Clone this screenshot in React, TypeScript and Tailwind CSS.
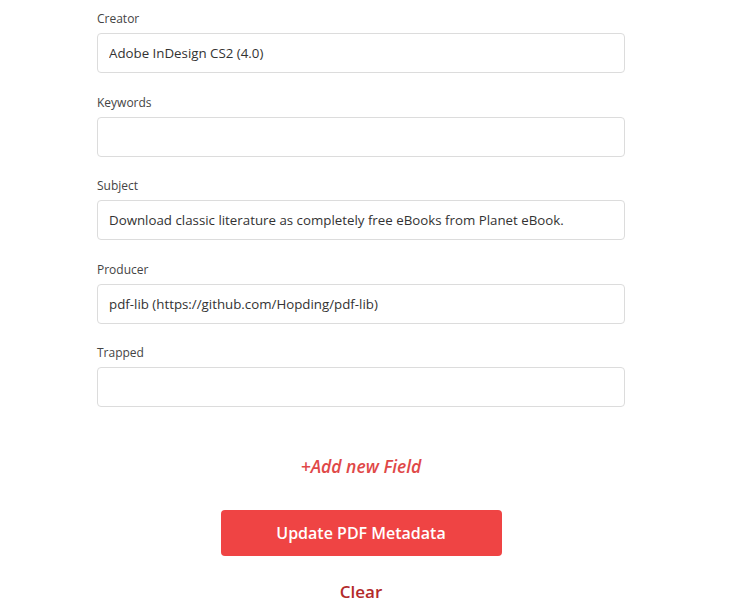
const fields = [
  { label: 'Creator', value: 'Adobe InDesign CS2 (4.0)' },
  { label: 'Keywords', value: '' },
  { label: 'Subject', value: 'Download classic literature as completely free eBooks from Planet eBook.' },
  { label: 'Producer', value: 'pdf-lib (https://github.com/Hopding/pdf-lib)' },
  { label: 'Trapped', value: '' },
];

export default function App() {
  return (
    <div className="min-h-screen bg-white font-['Open_Sans','Noto_Sans',sans-serif]">
      <div className="ml-[97px] w-[528px] pt-[10px]">
        <div className="flex flex-col gap-[20.5px]">
          {fields.map((f) => (
            <div key={f.label} className="flex flex-col gap-[6px]">
              <label className="pt-[1px] text-[12px] leading-[16px] text-[#444]">{f.label}</label>
              <input
                defaultValue={f.value}
                className="h-[40px] w-full rounded-[4px] border border-[#dcdcdc] px-[11px] text-[13.3px] text-[#333] outline-none"
              />
            </div>
          ))}
        </div>
        <div className="mt-[46px] flex flex-col items-center">
          <button className="text-[17.5px] font-semibold italic text-[#e04848]">+Add new Field</button>
          <button className="mt-[31px] h-[46px] w-[281px] rounded-[4px] bg-[#ef4444] text-[16px] font-semibold text-white">
            Update PDF Metadata
          </button>
          <button className="mt-[23px] text-[17px] font-semibold text-[#b32a2a]">Clear</button>
        </div>
      </div>
    </div>
  );
}
